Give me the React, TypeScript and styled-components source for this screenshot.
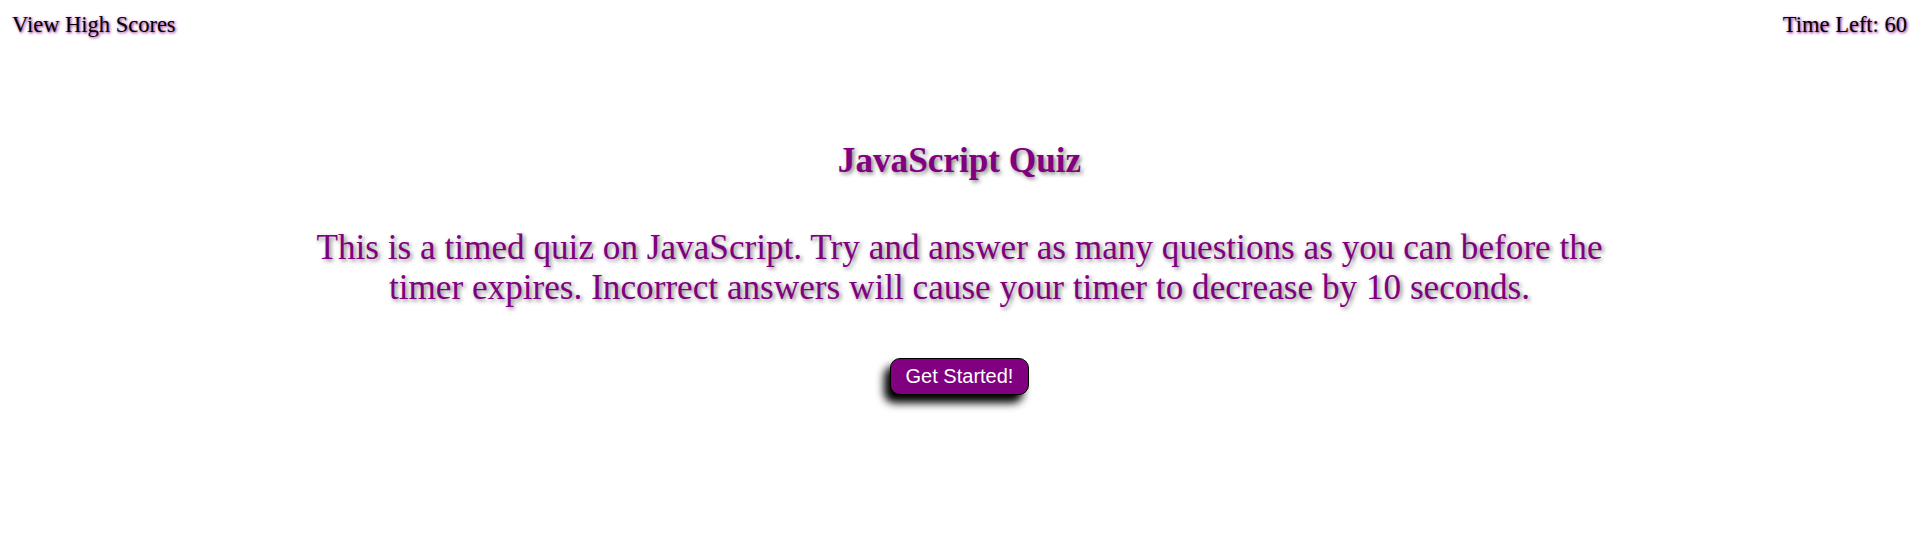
import styled, { createGlobalStyle } from 'styled-components';

const GlobalStyle = createGlobalStyle`
  html, body {
    min-height: 100%;
  }
  body {
    margin: 0;
    min-height: 100vh;
    background: #fff;
    font-family: "Liberation Serif", "Times New Roman", serif;
  }
`;

const Header = styled.header`
  display: flex;
  justify-content: space-between;
  align-items: center;
  padding: 12px 12px 0 12px;
  font-size: 22.5px;
  color: #000;
  text-shadow: 1px 1px 3px purple;
`;

const HeaderLink = styled.a`
  color: inherit;
  text-decoration: none;
  cursor: pointer;
`;

const Main = styled.main`
  display: flex;
  flex-direction: column;
  align-items: center;
  text-align: center;
  margin: 0 auto;
  width: 70%;
  padding-top: 103px;
  padding-bottom: 40px;
`;

const Title = styled.h1`
  margin: 0;
  font-size: 35.2px;
  color: purple;
  text-shadow: 2px 2px 4px gray;
`;

const Intro = styled.p`
  margin: 47px 0 0;
  font-size: 35.2px;
  color: purple;
  text-shadow: 2px 2px 4px gray;
`;

const StartButton = styled.button`
  margin-top: 50px;
  padding: 6px 15px;
  font-family: "Liberation Sans", Arial, sans-serif;
  font-size: 20px;
  color: #fff;
  background: purple;
  border: 1px solid #000;
  border-radius: 10px;
  box-shadow: -6px 8px 8px #000;
  cursor: pointer;
`;

export default function App() {
  return (
    <>
      <GlobalStyle />
      <Header>
        <HeaderLink>View High Scores</HeaderLink>
        <span>Time Left: 60</span>
      </Header>
      <Main>
        <Title>JavaScript Quiz</Title>
        <Intro>
          This is a timed quiz on JavaScript. Try and answer as many questions as you can before the
          timer expires. Incorrect answers will cause your timer to decrease by 10 seconds.
        </Intro>
        <StartButton>Get Started!</StartButton>
      </Main>
    </>
  );
}
